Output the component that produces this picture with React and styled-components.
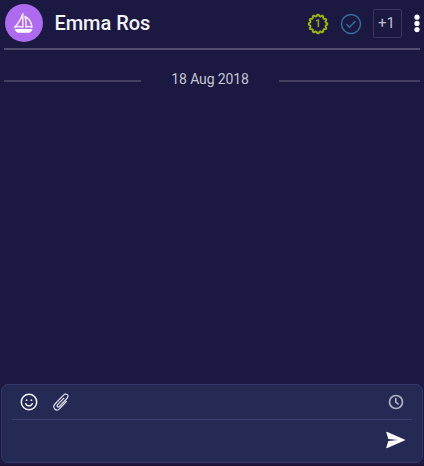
import React from "react";
import styled, { createGlobalStyle } from "styled-components";

const GlobalStyle = createGlobalStyle`
  * { box-sizing: border-box; }
  body { margin: 0; background: #1b1942; font-family: Roboto, "Liberation Sans", sans-serif; overflow: hidden; }
  svg { display: block; flex: none; }
`;

const Screen = styled.main`
  display: flex;
  flex-direction: column;
  height: 466px;
  background: #1b1942;
  border-bottom: 1px solid #1a1029;
`;

const Header = styled.header`
  display: flex;
  align-items: center;
  height: 50px;
  margin: 0 4px;
  padding-bottom: 3px;
  border-bottom: 2px solid #504d6f;
`;

const Avatar = styled.div`
  width: 38px;
  height: 38px;
  margin-left: 0.5px;
  margin-top: 1px;
  border-radius: 50%;
  background: #ae6bf0;
`;

const Name = styled.h1`
  margin: 0 0 1px 12px;
  padding-top: 1px;
  font-size: 20px;
  line-height: 24px;
  font-weight: 500;
  letter-spacing: -0.05px;
  color: #f3f2f7;
  white-space: nowrap;
`;

const Actions = styled.div`
  display: flex;
  align-items: center;
  margin-left: auto;
  padding-top: 2px;
`;

const IconButton = styled.button`
  display: flex;
  padding: 0;
  border: 0;
  background: none;
  color: ${(p) => p.$color || "#fff"};
  margin-right: ${(p) => p.$gap || 0}px;
`;

const CountButton = styled.button`
  width: 29px;
  height: 29px;
  padding: 0 2px 0 0;
  margin-right: 12px;
  border: 1px solid #393660;
  border-radius: 2px;
  background: none;
  color: #c0bfcb;
  font: 400 15px/27px Roboto, sans-serif;
`;

const DateRow = styled.div`
  display: flex;
  align-items: center;
  justify-content: space-between;
  height: 20px;
  margin: 20px 4px 0;
`;

const Rule = styled.span`
  width: ${(p) => p.$width}px;
  height: 2px;
  margin-top: 1px;
  background: #434064;
`;

const DateLabel = styled.time`
  font-size: 14px;
  letter-spacing: -0.14px;
  line-height: 20px;
  margin-top: -2px;
  color: #c6c5d1;
  white-space: nowrap;
`;

const Messages = styled.section`
  flex: 1;
`;

const Composer = styled.section`
  height: 79px;
  margin: 0 1px 2px;
  padding: 0 10px;
  border: 1px solid #34396a;
  border-radius: 7px;
  background: #252a55;
`;

const Toolbar = styled.div`
  display: flex;
  align-items: center;
  height: 35px;
  padding: 0 8px 0 7.5px;
  border-bottom: 1px solid #3b4070;
`;

const InputRow = styled.div`
  display: flex;
  align-items: center;
  justify-content: flex-end;
  height: 41px;
  padding: 0 6px 1px 0;
`;

const Spacer = styled.span`
  flex: 1;
`;

const Sailboat = () => (
  <svg width="38" height="38" viewBox="0 0 38 38" fill="none" stroke="#f6eaff" strokeWidth="1.5" strokeLinejoin="round">
    <path d="M17.8 9.8v13.4c-3-.9-5.6-.9-8.3 0 3.8-3.4 6.2-7.6 8.3-13.4Z" />
    <path d="M20 12.5c4.2 2 6.5 5.8 7 10.8-2.5-.9-4.5-.9-6.1-.1.5-3.8.2-7.2-.9-10.7Z" />
    <path d="M9.6 25h17.9c-.4 1.7-1.6 3.1-3 3.7H13c-1.7-.5-2.8-1.9-3.4-3.7Z" fill="#fff" stroke="none" />
  </svg>
);

const gearPoints = Array.from({ length: 48 }, (_, i) => {
  const angle = ((i - 0.5) * Math.PI) / 24;
  const radius = i % 4 < 2 ? 9.3 : 7.9;
  return `${(11 + radius * Math.sin(angle)).toFixed(2)},${(11 - radius * Math.cos(angle)).toFixed(2)}`;
}).join(" ");

const Badge = () => (
  <svg width="22" height="22" viewBox="0 0 22 22">
    <polygon points={gearPoints} fill="none" stroke="#9cb800" strokeWidth="1.9" strokeLinejoin="round" />
    <text x="10.8" y="14.4" textAnchor="middle" fontFamily="Roboto, sans-serif" fontSize="10" fontWeight="700" fill="#8fa908">1</text>
  </svg>
);

const CheckCircle = () => (
  <svg width="22" height="22" viewBox="0 0 22 22" fill="none" stroke="currentColor" strokeWidth="1.5">
    <circle cx="11" cy="11" r="9.5" />
    <path d="m6.5 11.2 3 3 6-6.3" />
  </svg>
);

const Dots = () => (
  <svg width="6" height="20" viewBox="0 0 6 20" fill="currentColor">
    <circle cx="3" cy="3.2" r="2.6" />
    <circle cx="3" cy="9.4" r="2.6" />
    <circle cx="3" cy="15.6" r="2.6" />
  </svg>
);

const Smiley = () => (
  <svg width="18" height="18" viewBox="0 0 18 18" fill="none" stroke="currentColor" strokeWidth="1.5" strokeLinecap="round">
    <circle cx="9" cy="9" r="7.7" />
    <path d="M5.7 10.8c.6 1.4 1.7 2.1 3.3 2.1s2.7-.7 3.3-2.1" />
    <circle cx="6.6" cy="7.2" r=".9" fill="currentColor" stroke="none" />
    <circle cx="11.4" cy="7.2" r=".9" fill="currentColor" stroke="none" />
  </svg>
);

const Paperclip = () => (
  <svg width="18" height="20" viewBox="0 0 18 20" fill="none" stroke="currentColor" strokeWidth="1.2" strokeLinecap="round" strokeLinejoin="round">
    <path d="M11.9 6.1 5.6 12.7c-.7.8-.7 1.5-.2 2 .6.6 1.4.4 2-.2l7.5-8c1.2-1.3 1.4-2.8.4-3.8s-2.6-.9-3.8.4L3 12c-1.5 1.7-1.5 3.7-.2 5s3.4 1.1 4.9-.4l6.6-7.1" />
  </svg>
);

const Clock = () => (
  <svg width="16" height="16" viewBox="0 0 16 16" fill="none" stroke="currentColor" strokeWidth="1.7">
    <circle cx="8" cy="8" r="6.5" />
    <path d="M7.8 4v4.2l2.8 2.2" />
  </svg>
);

const Send = () => (
  <svg width="20" height="18" viewBox="0 0 20 18" fill="currentColor">
    <path d="M.8.8 19.6 9 .8 17.2C.4 17.3.2 17 .3 16.6L2.3 10 12 9 2.3 8 .3 1.4C.2 1 .4.7.8.8Z" />
  </svg>
);

export default function App() {
  return (
    <>
      <GlobalStyle />
      <Screen>
        <Header>
          <Avatar><Sailboat /></Avatar>
          <Name>Emma Ros</Name>
          <Actions>
            <IconButton $gap={11} aria-label="Badge"><Badge /></IconButton>
            <IconButton $gap={11.5} $color="#356c98" aria-label="Mark done"><CheckCircle /></IconButton>
            <CountButton>+1</CountButton>
            <IconButton aria-label="More"><Dots /></IconButton>
          </Actions>
        </Header>
        <DateRow>
          <Rule $width={137} />
          <DateLabel>18 Aug 2018</DateLabel>
          <Rule $width={141} />
        </DateRow>
        <Messages />
        <Composer>
          <Toolbar>
            <IconButton $gap={14.5} $color="#f4f4f8" aria-label="Emoji"><Smiley /></IconButton>
            <IconButton $color="#dcdce6" aria-label="Attach"><Paperclip /></IconButton>
            <Spacer />
            <IconButton $color="#b1b2bf" aria-label="Schedule"><Clock /></IconButton>
          </Toolbar>
          <InputRow>
            <IconButton aria-label="Send"><Send /></IconButton>
          </InputRow>
        </Composer>
      </Screen>
    </>
  );
}
